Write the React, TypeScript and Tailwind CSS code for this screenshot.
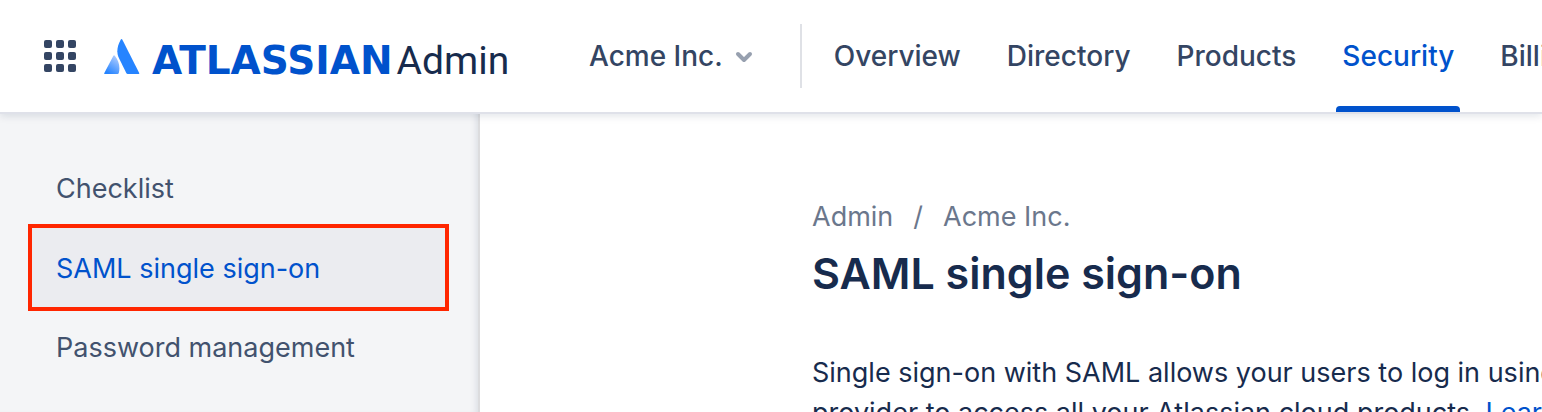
const navItems = [
  { label: "Overview", active: false },
  { label: "Directory", active: false },
  { label: "Products", active: false },
  { label: "Security", active: true },
  { label: "Billing", active: false },
];

function AppSwitcherIcon() {
  const cells = [0, 12, 24];
  return (
    <svg width="32" height="32" viewBox="0 0 32 32" fill="#344563" aria-hidden="true">
      {cells.map((y) => cells.map((x) => <rect key={`${x}-${y}`} x={x} y={y} width="8" height="8" rx="2" />))}
    </svg>
  );
}

function AtlassianMark() {
  return (
    <svg width="36" height="36" viewBox="0 0 36 36" className="mt-0.5 shrink-0" aria-hidden="true">
      <defs>
        <linearGradient id="mark" x1="14" y1="19" x2="4" y2="34" gradientUnits="userSpaceOnUse">
          <stop offset="0" stopColor="#a9c9ff" />
          <stop offset="1" stopColor="#2684ff" />
        </linearGradient>
      </defs>
      <path d="M9.4 16.7 Q10 15.6 10.8 16.7 C14.6 21.5 16.5 27.5 14.8 34 Q14.5 35 13.6 35 H0.7 Q-0.2 35 0.2 34.2 Z" fill="url(#mark)" />
      <path d="M16.7 0.7 Q17.5 -0.6 18.4 0.8 L35.2 34.1 Q35.6 35 34.7 35 H23.7 Q22.8 35 22.4 34.2 L14.3 17.8 C12.4 12.5 13.3 6.8 16.7 0.7 Z" fill="#2684ff" />
    </svg>
  );
}

function Header() {
  return (
    <header className="relative z-10 flex h-28 items-center bg-white pl-11 text-[28px] font-medium text-[#344563] shadow-[0_2px_0_#dfe1e9,0_4px_8px_rgba(9,30,66,0.12)]">
      <button type="button" aria-label="Switch apps" className="shrink-0">
        <AppSwitcherIcon />
      </button>
      <a href="#home" className="ml-7 flex w-[405px] shrink-0 items-center whitespace-nowrap">
        <AtlassianMark />
        <span className="mt-2.5 ml-3 flex items-baseline gap-1 leading-none">
          <span className="font-['DejaVu_Sans',sans-serif] text-[39px] font-bold text-[#0052cc]">ATLASSIAN</span>
          <span className="font-['Roboto',sans-serif] text-[39px] font-normal text-[#172b4d]">Admin</span>
        </span>
      </a>
      <button type="button" className="ml-20 flex shrink-0 items-center gap-3 whitespace-nowrap">
        <span>Acme Inc.</span>
        <svg width="18" height="12" viewBox="0 0 18 12" fill="none" stroke="#97a0af" strokeWidth="4" strokeLinecap="round" strokeLinejoin="round" className="mt-0.5" aria-hidden="true">
          <path d="M3 3l6 6 6-6" />
        </svg>
      </button>
      <nav className="ml-[47px] flex h-full min-w-0 flex-1 items-center overflow-hidden">
        <div className="mr-6 h-16 w-0.5 shrink-0 bg-[#dfe1e6]" />
        {navItems.map((item) => (
          <a
            key={item.label}
            href={`#${item.label.toLowerCase()}`}
            className="mr-[30px] flex h-full shrink-0 flex-col px-2"
          >
            <span className={item.active ? "flex flex-1 items-center pt-1.5 text-[#0052cc]" : "flex flex-1 items-center pt-1.5"}>{item.label}</span>
            <span className={item.active ? "-mx-1.5 h-1.5 rounded-t-sm bg-[#0052cc]" : "h-1.5"} />
          </a>
        ))}
      </nav>
    </header>
  );
}

function Sidebar() {
  return (
    <aside className="w-120 shrink-0 border-r-2 border-[#dcdcde] bg-[#f4f5f7] pt-10 pr-[29px] pl-7 text-[#42526e] shadow-[inset_-6px_0_6px_-4px_rgba(9,30,66,0.10)]">
      <nav className="flex flex-col">
        <a href="#checklist" className="flex h-18 items-center px-7 pt-0.5">Checklist</a>
        <a href="#saml" className="flex h-[87px] items-center border-4 border-[#ff2600] bg-[#ebecf0] px-6 pt-0.5 text-[#0052cc]">SAML single sign-on</a>
        <a href="#passwords" className="flex h-18 items-center px-7 pt-0.5">Password management</a>
      </nav>
    </aside>
  );
}

export default function App() {
  return (
    <div className="flex h-screen flex-col overflow-hidden bg-white font-['Inter',sans-serif] text-[27px] leading-10">
      <Header />
      <div className="flex min-h-0 flex-1">
        <Sidebar />
        <main className="min-w-0 flex-1 pt-[85px] pl-83 text-[#172b4d]">
          <nav aria-label="Breadcrumb" className="flex gap-5 text-[#6b778c]">
            <a href="#admin">Admin</a>
            <span>/</span>
            <a href="#acme">Acme Inc.</a>
          </nav>
          <h1 className="mt-1 text-[43px] leading-16 font-semibold">SAML single sign-on</h1>
          <p className="mt-12 whitespace-nowrap">
            Single sign-on with SAML allows your users to log in using your identity
            <br />
            provider to access all your Atlassian cloud products. <a href="#learn" className="text-[#0052cc]">Learn more</a>
          </p>
        </main>
      </div>
    </div>
  );
}
